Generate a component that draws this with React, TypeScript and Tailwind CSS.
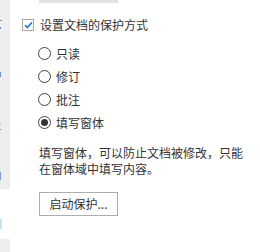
import { useState } from 'react';

const font = { fontFamily: '"Microsoft YaHei", "Noto Sans CJK SC", "Noto Sans", sans-serif' };

const options = ['只读', '修订', '批注', '填写窗体'];

const Radio = ({ checked }: { checked: boolean }) => (
  <span className="flex h-[13px] w-[13px] items-center justify-center rounded-full border border-[#444] bg-white">
    {checked && <span className="h-[7px] w-[7px] rounded-full bg-[#333]" />}
  </span>
);

export default function App() {
  const [mode, setMode] = useState('填写窗体');
  const [enabled, setEnabled] = useState(true);

  return (
    <div className="flex h-[252px] w-[260px] overflow-hidden bg-white text-[12px] text-[#333]" style={font}>
      {/* sidebar edge */}
      <div className="flex w-[10px] flex-col">
        <div className="relative h-[189px] bg-[#eceef0]">
          <div className="absolute left-0 top-[20px] h-[1px] w-[2px] bg-[#6b8fc4]" />
          <div className="absolute left-0 top-[27px] h-[2px] w-[1px] bg-[#6b8fc4]" />
          <div className="absolute left-0 top-[72px] h-[5px] w-[1px] bg-[#6b8fc4]" />
          <div className="absolute left-0 top-[123px] h-[1px] w-[1px] bg-[#9ab3d8]" />
          <div className="absolute left-0 top-[129px] h-[1px] w-[1px] bg-[#6b8fc4]" />
          <div className="absolute left-0 top-[172px] h-[8px] w-[1px] bg-[#7f9ccc]" />
        </div>
        <div className="h-[30px]" />
        <div className="h-[10px] w-[2px] bg-[#bfe3f4]" />
        <div className="h-[10px]" />
        <div className="flex-1 bg-[#eceef0]" />
      </div>

      <div className="flex flex-1 flex-col">
        <div className="ml-[29px] h-[3px] w-[79px] bg-[#e1e1e1]" />

        <label className="ml-[12px] mt-[16px] flex h-[12px] cursor-pointer items-center" onClick={() => setEnabled(!enabled)}>
          <span className="flex h-[12px] w-[12px] items-center justify-center border border-[#a9a9a9] bg-white">
            {enabled && (
              <svg width="9" height="8" viewBox="0 0 9 8">
                <path d="M1 4.2 L3.4 6.5 L8 1.4" fill="none" stroke="#2b79d6" strokeWidth="1.6" />
              </svg>
            )}
          </span>
          <span className="ml-[6px] leading-none">设置文档的保护方式</span>
        </label>

        <div className="ml-[28px] mt-[11px] flex flex-col">
          {options.map((o) => (
            <div key={o} className="flex h-[23px] cursor-pointer items-center" onClick={() => setMode(o)}>
              <Radio checked={mode === o} />
              <span className="ml-[5px] leading-none">{o}</span>
            </div>
          ))}
        </div>

        <p className="ml-[29px] mt-[11px] w-[210px] leading-[16px]">
          填写窗体，可以防止文档被修改，只能在窗体域中填写内容。
        </p>

        <button className="ml-[29px] mt-[15px] h-[24px] w-[79px] border border-[#adadad] bg-white text-[12px] leading-none text-[#333]">
          启动保护...
        </button>
      </div>
    </div>
  );
}
